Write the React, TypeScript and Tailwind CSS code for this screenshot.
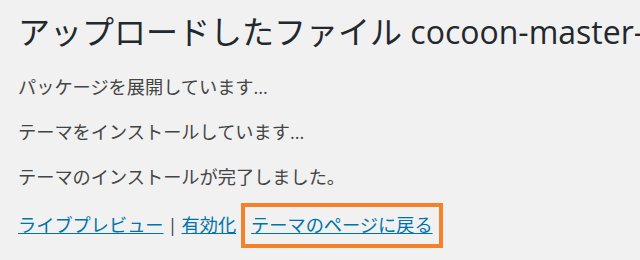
export default function App() {
  const font = { fontFamily: '"Open Sans", "Noto Sans CJK JP", sans-serif' };
  return (
    <div
      className="h-[260px] w-[640px] overflow-hidden bg-[#f1f1f1] pl-[18px] text-[#444]"
      style={font}
    >
      <h1 className="whitespace-nowrap pt-[11px] text-[32px] font-normal leading-[42px] text-[#23282d]">
        アップロードしたファイル cocoon-master-6
      </h1>
      <p className="mt-[21px] text-[18.2px] leading-[27px]">パッケージを展開しています...</p>
      <p className="mt-[18px] text-[18.2px] leading-[27px]">テーマをインストールしています...</p>
      <p className="mt-[18px] text-[18.2px] leading-[27px]">テーマのインストールが完了しました。</p>
      <div className="mt-[21px] flex h-[27px] items-center text-[18.2px] leading-[27px]">
        <a href="#" className="text-[#0073aa] underline">ライブプレビュー</a>
        <span className="mx-[4px]">|</span>
        <a href="#" className="text-[#0073aa] underline">有効化</a>
        <span className="ml-[5px] border-4 border-[#f5822a] px-[6px] py-[5px]">
          <a href="#" className="text-[#0073aa] underline">テーマのページに戻る</a>
        </span>
      </div>
    </div>
  );
}
